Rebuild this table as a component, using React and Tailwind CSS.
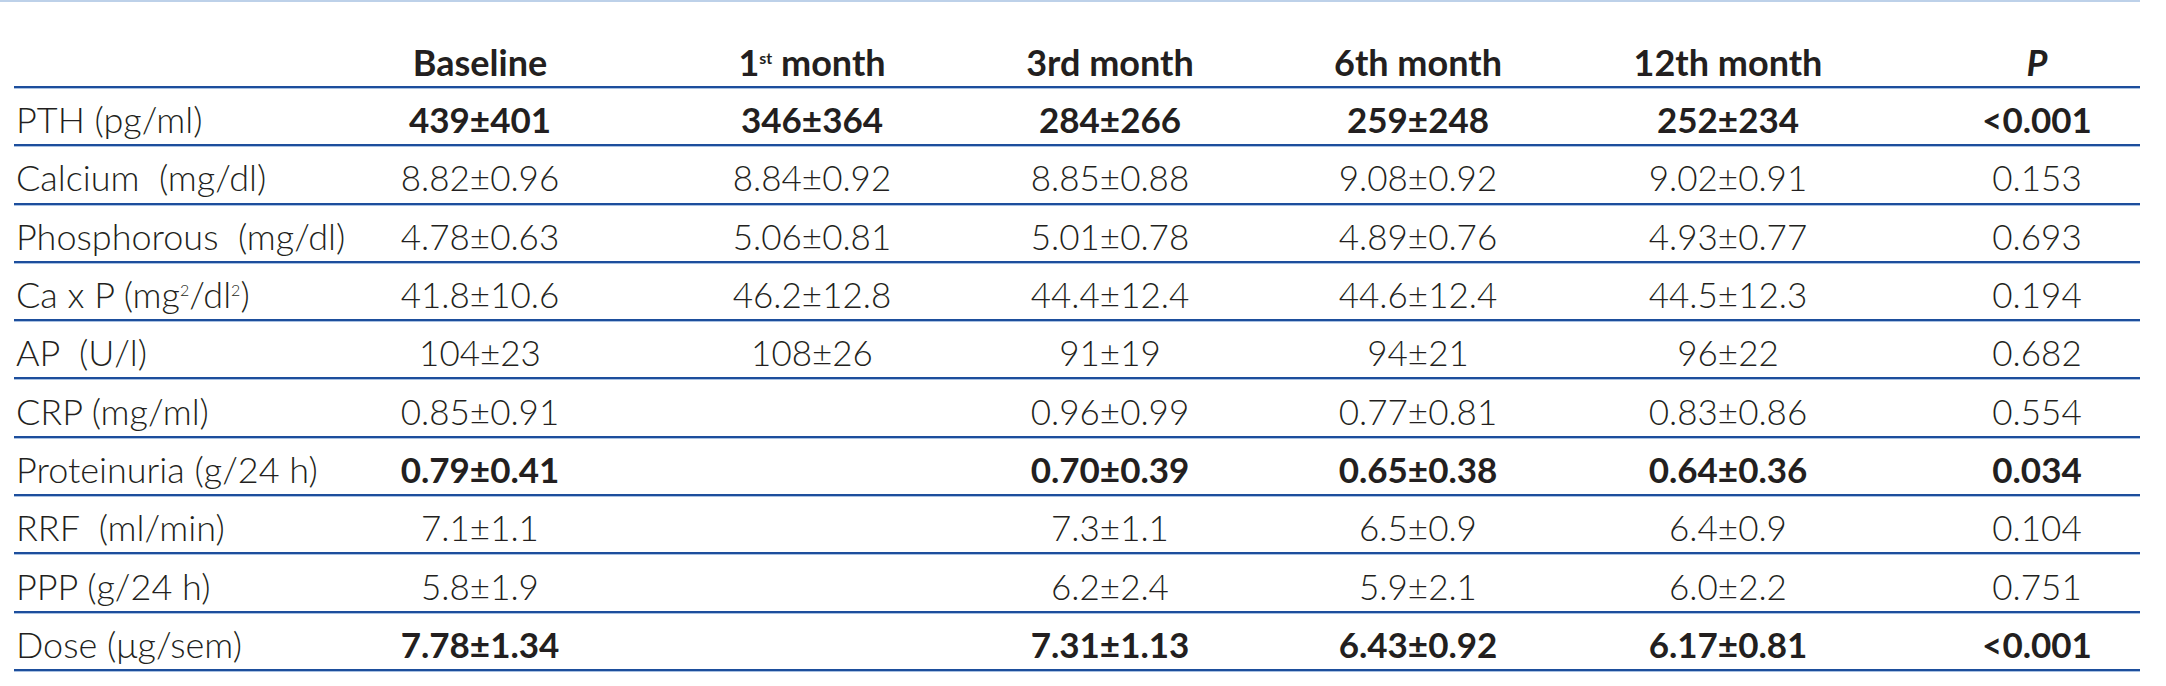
const Sup = ({ children }) => (
  <span className="relative -top-[12px] text-[16px] leading-none">{children}</span>
);

const rows = [
  { label: "PTH (pg/ml)", values: ["439±401", "346±364", "284±266", "259±248", "252±234", "<0.001"], bold: true },
  { label: "Calcium  (mg/dl)", values: ["8.82±0.96", "8.84±0.92", "8.85±0.88", "9.08±0.92", "9.02±0.91", "0.153"] },
  { label: "Phosphorous  (mg/dl)", values: ["4.78±0.63", "5.06±0.81", "5.01±0.78", "4.89±0.76", "4.93±0.77", "0.693"] },
  {
    label: (
      <>
        Ca x P (mg<Sup>2</Sup>/dl<Sup>2</Sup>)
      </>
    ),
    values: ["41.8±10.6", "46.2±12.8", "44.4±12.4", "44.6±12.4", "44.5±12.3", "0.194"],
  },
  { label: "AP  (U/l)", values: ["104±23", "108±26", "91±19", "94±21", "96±22", "0.682"] },
  { label: "CRP (mg/ml)", values: ["0.85±0.91", "", "0.96±0.99", "0.77±0.81", "0.83±0.86", "0.554"] },
  { label: "Proteinuria (g/24 h)", values: ["0.79±0.41", "", "0.70±0.39", "0.65±0.38", "0.64±0.36", "0.034"], bold: true },
  { label: "RRF  (ml/min)", values: ["7.1±1.1", "", "7.3±1.1", "6.5±0.9", "6.4±0.9", "0.104"] },
  { label: "PPP (g/24 h)", values: ["5.8±1.9", "", "6.2±2.4", "5.9±2.1", "6.0±2.2", "0.751"] },
  { label: "Dose (μg/sem)", values: ["7.78±1.34", "", "7.31±1.13", "6.43±0.92", "6.17±0.81", "<0.001"], bold: true },
];

const grid =
  "grid grid-cols-[306px_320px_344px_252px_364px_256px_284px] border-b-2 border-[#1d4e9c] shadow-[0_1px_0_#a9c1e2]";

export default function App() {
  return (
    <div className="w-[2166px] h-[686px] bg-white font-['Lato',sans-serif] text-[#231f20]">
      <div className="w-[2140px] h-[2px] bg-[#bdd1e9]" />

      <div className="ml-[14px] w-[2126px]">
        {/* header */}
        <div className={`${grid} h-[86px] items-end pb-[4px] text-[36px] font-bold leading-[40px]`}>
          <div />
          <div className="text-center">Baseline</div>
          <div className="text-center">
            1<Sup>st</Sup> month
          </div>
          <div className="text-center">3rd month</div>
          <div className="text-center">6th month</div>
          <div className="text-center">12th month</div>
          <div className="pl-[78px] text-center italic">P</div>
        </div>

        {rows.map((row, i) => (
          <div key={i} className={`${grid} h-[58.3px] items-center pt-[6px] leading-[40px]`}>
            <div className="pl-[2px] whitespace-pre text-[36px] font-light">{row.label}</div>
            {row.values.map((v, j) => (
              <div
                key={j}
                className={`text-center text-[35px] ${row.bold ? "font-bold" : "font-light"} ${
                  j === 5 ? "pl-[78px]" : ""
                }`}
              >
                {v}
              </div>
            ))}
          </div>
        ))}
      </div>
    </div>
  );
}
